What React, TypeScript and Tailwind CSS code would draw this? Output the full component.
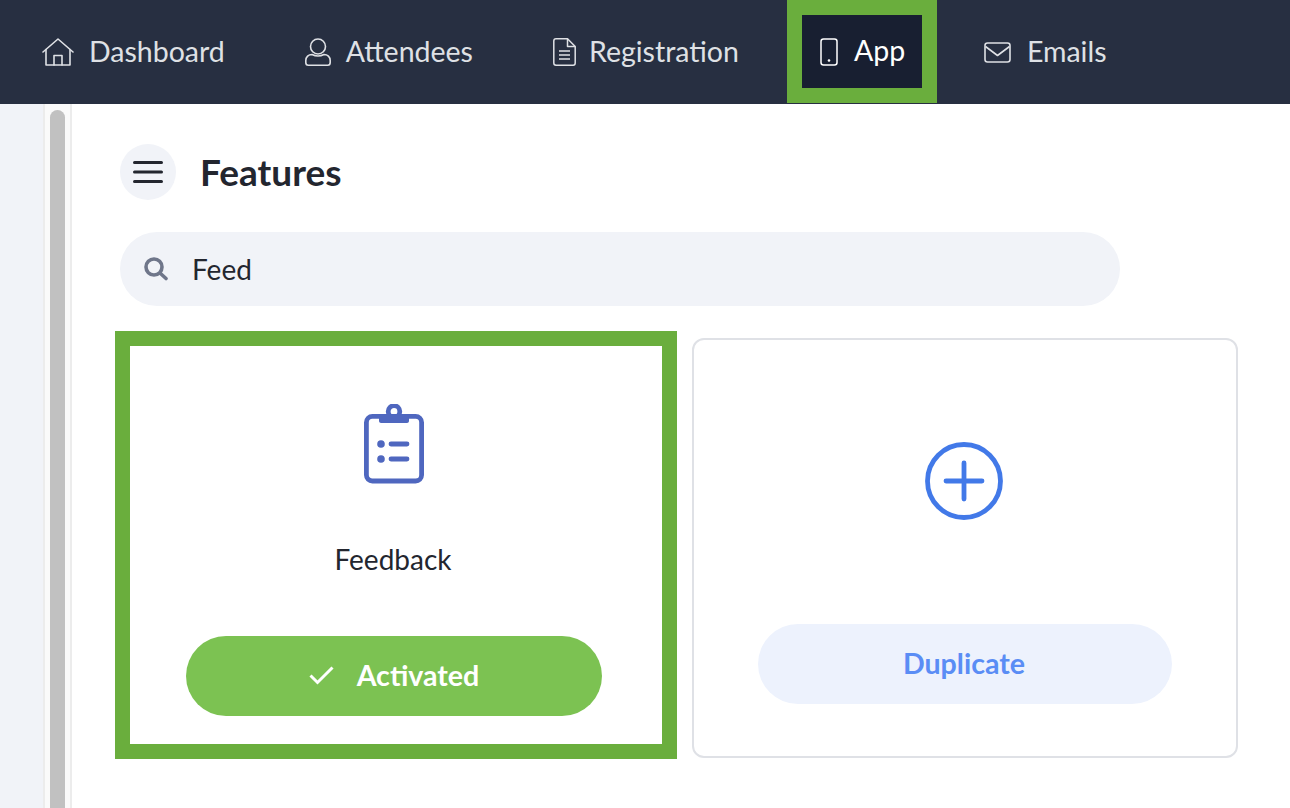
import React from 'react'

const HomeIcon = () => (
  <svg width="32" height="28" viewBox="0 0 32 28" fill="none" stroke="#dfe1e5" strokeWidth="1.6" strokeLinejoin="round" strokeLinecap="round">
    <path d="M1 14 16 1l15 13" />
    <path d="M4 11.500V27h24V11.500" />
    <path d="M12 27V17.500h8V27" />
  </svg>
)

const UserIcon = () => (
  <svg width="26" height="28" viewBox="0 0 26 28" fill="none" stroke="#dfe1e5" strokeWidth="1.6">
    <circle cx="13" cy="8.500" r="7.500" />
    <path d="M7 16.500c2 1 3.500 1.500 6 1.500s4-.5 6-1.500c3.500 0 6.200 2.500 6.200 6v2c0 1.500-1 2.700-2.500 2.700H3.300C1.800 27.200.8 26 .8 24.500v-2c0-3.500 2.700-6 6.200-6Z" />
  </svg>
)

const DocIcon = () => (
  <svg width="23" height="28" viewBox="0 0 23 28" fill="none" stroke="#dfe1e5" strokeWidth="1.5" strokeLinejoin="round">
    <path d="M3 .8h11.500l7.700 7.700V25c0 1.200-.8 2.200-2 2.200H3c-1.200 0-2.200-1-2.200-2.200V3C.8 1.800 1.800.8 3 .8Z" />
    <path d="M14.500.8v7.700h7.700" />
    <path d="M6 13h11M6 17h11M6 21h11" />
  </svg>
)

const PhoneIcon = () => (
  <svg width="18" height="28" viewBox="0 0 18 28" fill="none" stroke="#ffffff" strokeWidth="1.5">
    <rect x="1" y="1" width="16" height="26" rx="2.500" />
    <circle cx="9" cy="22.500" r="1.300" fill="#ffffff" stroke="none" />
  </svg>
)

const MailIcon = () => (
  <svg width="27" height="21" viewBox="0 0 27 21" fill="none" stroke="#dfe1e5" strokeWidth="1.6" strokeLinejoin="round">
    <rect x="1" y="1" width="25" height="19" rx="2.500" />
    <path d="M1.500 4.500 13.500 13.500l12-9" />
  </svg>
)

const MenuIcon = () => (
  <svg width="30" height="22" viewBox="0 0 30 22" fill="none" stroke="#23262f" strokeWidth="3" strokeLinecap="round">
    <path d="M1.500 1.500h27M1.500 11h27M1.500 20.500h27" />
  </svg>
)

const SearchIcon = () => (
  <svg width="24" height="24" viewBox="0 0 24 24" fill="none" stroke="#6f768a" strokeWidth="3.600" strokeLinecap="round">
    <circle cx="10" cy="10" r="8" />
    <path d="m16.500 16.500 5.500 5" />
  </svg>
)

const ClipboardIcon = () => (
  <svg width="60" height="80" viewBox="0 0 60 80" fill="none" stroke="#4f67bf" strokeWidth="4.800" strokeLinecap="round">
    <rect x="2.400" y="12.400" width="55.200" height="64.600" rx="6" />
    <circle cx="30" cy="7.500" r="5.800" />
    <path d="M15 11h30v6c0 1-1 2-2 2H17c-1 0-2-1-2-2Z" fill="#4f67bf" stroke="none" />
    <circle cx="17" cy="40" r="3.800" fill="#4f67bf" stroke="none" />
    <circle cx="17" cy="55" r="3.800" fill="#4f67bf" stroke="none" />
    <path d="M27 40h16M27 55h16" />
  </svg>
)

const PlusCircleIcon = () => (
  <svg width="78" height="78" viewBox="0 0 78 78" fill="none" stroke="#4279e8" strokeWidth="4.800" strokeLinecap="round">
    <circle cx="39" cy="39" r="36.500" />
    <path d="M39 21v36M21 39h36" />
  </svg>
)

const CheckIcon = () => (
  <svg width="25" height="19" viewBox="0 0 25 19" fill="none" stroke="#ffffff" strokeWidth="3">
    <path d="m1.500 9.500 7 7L23.500 1.500" />
  </svg>
)

const navItems = [
  { label: 'Dashboard', icon: <HomeIcon />, gap: 'gap-[15px]' },
  { label: 'Attendees', icon: <UserIcon />, gap: 'gap-[15px]' },
  { label: 'Registration', icon: <DocIcon />, gap: 'gap-[13px]' },
]

export default function App() {
  return (
    <div className="h-[808px] w-[1290px] overflow-hidden bg-white font-['Lato',sans-serif] text-[#23262f]">
      <nav className="flex h-[104px] items-center gap-[80px] bg-[#272f41] pl-[42px] text-[28.500px] text-[#dfe1e5]">
        {navItems.map((item) => (
          <a key={item.label} className={`flex items-center ${item.gap}`}>
            {item.icon}
            <span className="pb-0.5">{item.label}</span>
          </a>
        ))}
        <a className="ml-[-32px] mr-[-33px] flex h-[103px] w-[150px] shrink-0 items-center gap-4 self-start border-[15px] border-[#6aae3d] bg-[#181f31] pl-[18px] text-white">
          <PhoneIcon />
          <span className="pb-0.5">App</span>
        </a>
        <a className="flex items-center gap-4">
          <MailIcon />
          <span className="pb-0.5">Emails</span>
        </a>
      </nav>

      <div className="flex h-[704px]">
        <div className="w-[43px] bg-[#f1f3f8]" />
        <div className="w-[29px] border-x-2 border-[#ececec] bg-[#fafafa] px-[5px] pt-[6px]">
          <div className="h-full rounded-t-lg bg-[#c1c1c1]" />
        </div>

        <main className="flex-1 pl-[48px] pt-[40px]">
          <div className="flex items-center gap-6">
            <button className="flex h-14 w-14 items-center justify-center rounded-full bg-[#f1f3f8]">
              <MenuIcon />
            </button>
            <h1 className="pb-0.5 text-[37px] font-bold leading-none">Features</h1>
          </div>

          <div className="mt-8 flex h-[74px] w-[1000px] items-center gap-6 rounded-full bg-[#f1f3f8] pl-6 text-[28px]">
            <SearchIcon />
            <span>Feed</span>
          </div>

          <div className="ml-[-5px] mt-[25px] flex items-start gap-[15px]">
            <div className="flex h-[428px] w-[562px] flex-col items-center border-[15px] border-[#6aae3d] pr-1 pt-[58px]">
              <ClipboardIcon />
              <div className="mr-[2px] mt-[58px] text-[28px] leading-[34px]">Feedback</div>
              <button className="mt-[60px] flex h-20 w-[416px] items-center justify-center gap-[23px] rounded-full bg-[#7cc252] pb-0.5 text-[28.600px] font-bold text-white">
                <CheckIcon />
                <span>Activated</span>
              </button>
            </div>

            <div className="mt-[7px] flex h-[420px] w-[546px] flex-col items-center rounded-xl border-2 border-[#dfe1e6] pt-[102px]">
              <div className="mr-[2px]">
                <PlusCircleIcon />
              </div>
              <button className="mt-[104px] h-20 w-[414px] rounded-full bg-[#edf2fd] pb-0.5 pr-[2px] text-[28.600px] font-bold text-[#5a8df5]">
                Duplicate
              </button>
            </div>
          </div>
        </main>
      </div>
    </div>
  )
}
